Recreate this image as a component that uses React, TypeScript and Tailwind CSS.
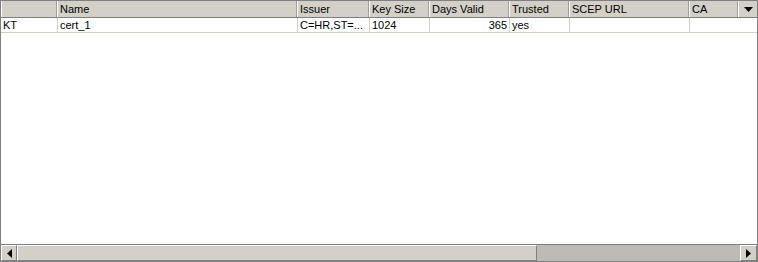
import React from "react";

const cols = [
  { label: "", w: 56 },
  { label: "Name", w: 240 },
  { label: "Issuer", w: 72 },
  { label: "Key Size", w: 60 },
  { label: "Days Valid", w: 80 },
  { label: "Trusted", w: 60 },
  { label: "SCEP URL", w: 120 },
  { label: "CA", w: 49 },
];

const row = ["KT", "cert_1", "C=HR,ST=...", "1024", "365", "yes", "", ""];

export default function App() {
  return (
    <div
      className="w-[758px] h-[262px] border border-[#808080] bg-white flex flex-col text-[11px] text-black overflow-hidden"
      style={{ fontFamily: '"Liberation Sans", Arial, sans-serif' }}
    >
      {/* Header */}
      <div className="flex h-[17px] bg-[#d4d0c8] border-b border-[#808080] shrink-0">
        {cols.map((c, i) => (
          <div
            key={i}
            className="h-full border-r border-[#a09d96] border-l border-l-white pl-[2px] leading-[16px] whitespace-nowrap overflow-hidden"
            style={{ width: c.w }}
          >
            {c.label}
          </div>
        ))}
        <div className="flex-1 h-full border-l border-l-white flex items-center justify-center">
          <svg width="9" height="5" viewBox="0 0 9 5">
            <polygon points="0,0 9,0 4.5,5" fill="#000" />
          </svg>
        </div>
      </div>
      {/* Body */}
      <div className="flex-1 bg-white">
        <div className="flex h-[15px] border-b border-[#d4d0c8]">
          {cols.slice(0, 7).map((c, i) => (
            <div
              key={i}
              className={`h-full border-r border-[#d4d0c8] px-[2px] leading-[14px] whitespace-nowrap overflow-hidden ${i === 4 ? "text-right" : ""}`}
              style={{ width: c.w + (i === 0 ? 1 : 0) }}
            >
              {row[i]}
            </div>
          ))}
          <div className="flex-1 h-full" />
        </div>
      </div>
      {/* Scrollbar */}
      <div className="flex h-[17px] border-t border-[#808080] bg-[#d4d0c8] shrink-0">
        <div className="w-[16px] h-full border border-t-white border-l-white border-r-[#808080] border-b-[#808080] flex items-center justify-center">
          <svg width="5" height="9" viewBox="0 0 5 9">
            <polygon points="5,0 5,9 0,4.5" fill="#000" />
          </svg>
        </div>
        <div className="w-[520px] h-full border border-t-white border-l-white border-r-[#808080] border-b-[#808080] bg-[#d4d0c8]" />
        <div className="flex-1 h-full bg-[#bdbab3]" />
        <div className="w-[17px] h-full border border-t-white border-l-white border-r-[#808080] border-b-[#808080] flex items-center justify-center">
          <svg width="5" height="9" viewBox="0 0 5 9">
            <polygon points="0,0 0,9 5,4.5" fill="#000" />
          </svg>
        </div>
      </div>
    </div>
  );
}
